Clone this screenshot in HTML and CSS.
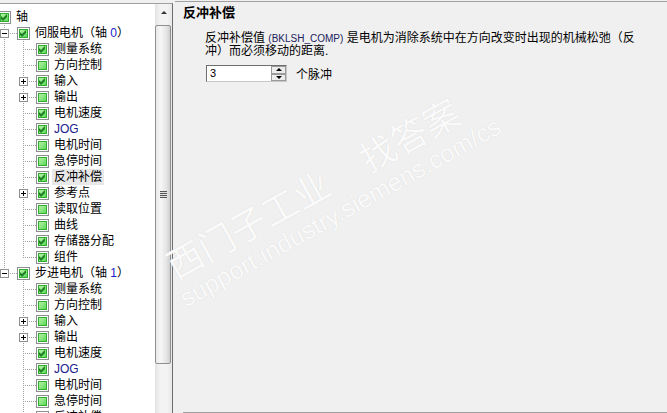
FILE: index.html
```html
<!DOCTYPE html>
<html lang="zh-CN">
<head>
  <meta charset="UTF-8">
  <title>反冲补偿</title>
  <link rel="stylesheet" href="styles.css">
</head>
<body>
  <div class="window">
    <div class="nav">
      <div class="tree">
        <!-- root -->
        <div class="row"><span class="cell conn"></span><span class="chk"><i><svg viewBox="0 0 7 7"><path d="M0 2L2 4L6 0V3L2 7L0 5Z"/></svg></i></span><span class="label">轴</span></div>

        <!-- axis 0 -->
        <div class="row"><span class="cell"></span><span class="cell conn mid"><b class="exp minus"></b></span><span class="chk"><i><svg viewBox="0 0 7 7"><path d="M0 2L2 4L6 0V3L2 7L0 5Z"/></svg></i></span><span class="label">伺服电机（轴 <em>0</em>）</span></div>
        <div class="row"><span class="cell"></span><span class="cell line"></span><span class="cell conn mid"></span><span class="chk"><i><svg viewBox="0 0 7 7"><path d="M0 2L2 4L6 0V3L2 7L0 5Z"/></svg></i></span><span class="label">测量系统</span></div>
        <div class="row"><span class="cell"></span><span class="cell line"></span><span class="cell conn mid"></span><span class="chk"><i></i></span><span class="label">方向控制</span></div>
        <div class="row"><span class="cell"></span><span class="cell line"></span><span class="cell conn mid"><b class="exp plus"></b></span><span class="chk"><i><svg viewBox="0 0 7 7"><path d="M0 2L2 4L6 0V3L2 7L0 5Z"/></svg></i></span><span class="label">输入</span></div>
        <div class="row"><span class="cell"></span><span class="cell line"></span><span class="cell conn mid"><b class="exp plus"></b></span><span class="chk"><i></i></span><span class="label">输出</span></div>
        <div class="row"><span class="cell"></span><span class="cell line"></span><span class="cell conn mid"></span><span class="chk"><i><svg viewBox="0 0 7 7"><path d="M0 2L2 4L6 0V3L2 7L0 5Z"/></svg></i></span><span class="label">电机速度</span></div>
        <div class="row"><span class="cell"></span><span class="cell line"></span><span class="cell conn mid"></span><span class="chk"><i><svg viewBox="0 0 7 7"><path d="M0 2L2 4L6 0V3L2 7L0 5Z"/></svg></i></span><span class="label latin">JOG</span></div>
        <div class="row"><span class="cell"></span><span class="cell line"></span><span class="cell conn mid"></span><span class="chk"><i></i></span><span class="label">电机时间</span></div>
        <div class="row"><span class="cell"></span><span class="cell line"></span><span class="cell conn mid"></span><span class="chk"><i></i></span><span class="label">急停时间</span></div>
        <div class="row"><span class="cell"></span><span class="cell line"></span><span class="cell conn mid"></span><span class="chk"><i><svg viewBox="0 0 7 7"><path d="M0 2L2 4L6 0V3L2 7L0 5Z"/></svg></i></span><span class="label selected">反冲补偿</span></div>
        <div class="row"><span class="cell"></span><span class="cell line"></span><span class="cell conn mid"><b class="exp plus"></b></span><span class="chk"><i><svg viewBox="0 0 7 7"><path d="M0 2L2 4L6 0V3L2 7L0 5Z"/></svg></i></span><span class="label">参考点</span></div>
        <div class="row"><span class="cell"></span><span class="cell line"></span><span class="cell conn mid"></span><span class="chk"><i></i></span><span class="label">读取位置</span></div>
        <div class="row"><span class="cell"></span><span class="cell line"></span><span class="cell conn mid"></span><span class="chk"><i></i></span><span class="label">曲线</span></div>
        <div class="row"><span class="cell"></span><span class="cell line"></span><span class="cell conn mid"></span><span class="chk"><i><svg viewBox="0 0 7 7"><path d="M0 2L2 4L6 0V3L2 7L0 5Z"/></svg></i></span><span class="label">存储器分配</span></div>
        <div class="row"><span class="cell"></span><span class="cell line"></span><span class="cell conn last"></span><span class="chk"><i><svg viewBox="0 0 7 7"><path d="M0 2L2 4L6 0V3L2 7L0 5Z"/></svg></i></span><span class="label">组件</span></div>

        <!-- axis 1 -->
        <div class="row"><span class="cell"></span><span class="cell conn last"><b class="exp minus"></b></span><span class="chk"><i><svg viewBox="0 0 7 7"><path d="M0 2L2 4L6 0V3L2 7L0 5Z"/></svg></i></span><span class="label">步进电机（轴 <em>1</em>）</span></div>
        <div class="row"><span class="cell"></span><span class="cell"></span><span class="cell conn mid"></span><span class="chk"><i><svg viewBox="0 0 7 7"><path d="M0 2L2 4L6 0V3L2 7L0 5Z"/></svg></i></span><span class="label">测量系统</span></div>
        <div class="row"><span class="cell"></span><span class="cell"></span><span class="cell conn mid"></span><span class="chk"><i></i></span><span class="label">方向控制</span></div>
        <div class="row"><span class="cell"></span><span class="cell"></span><span class="cell conn mid"><b class="exp plus"></b></span><span class="chk"><i></i></span><span class="label">输入</span></div>
        <div class="row"><span class="cell"></span><span class="cell"></span><span class="cell conn mid"><b class="exp plus"></b></span><span class="chk"><i></i></span><span class="label">输出</span></div>
        <div class="row"><span class="cell"></span><span class="cell"></span><span class="cell conn mid"></span><span class="chk"><i><svg viewBox="0 0 7 7"><path d="M0 2L2 4L6 0V3L2 7L0 5Z"/></svg></i></span><span class="label">电机速度</span></div>
        <div class="row"><span class="cell"></span><span class="cell"></span><span class="cell conn mid"></span><span class="chk"><i><svg viewBox="0 0 7 7"><path d="M0 2L2 4L6 0V3L2 7L0 5Z"/></svg></i></span><span class="label latin">JOG</span></div>
        <div class="row"><span class="cell"></span><span class="cell"></span><span class="cell conn mid"></span><span class="chk"><i></i></span><span class="label">电机时间</span></div>
        <div class="row"><span class="cell"></span><span class="cell"></span><span class="cell conn mid"></span><span class="chk"><i></i></span><span class="label">急停时间</span></div>
        <div class="row"><span class="cell"></span><span class="cell"></span><span class="cell conn mid"></span><span class="chk"><i><svg viewBox="0 0 7 7"><path d="M0 2L2 4L6 0V3L2 7L0 5Z"/></svg></i></span><span class="label">反冲补偿</span></div>
      </div>
      <div class="scrollbar">
        <div class="sb-up"><span class="arrow"></span></div>
        <div class="sb-thumb"><span class="grip"></span></div>
      </div>
    </div>

    <div class="detail">
      <div class="detail-body">
        <h1>反冲补偿</h1>
        <p>反冲补偿值 <span class="code">(BKLSH_COMP)</span> 是电机为消除系统中在方向改变时出现的机械松弛（反<br>冲）而必须移动的距离.</p>
        <div class="value-row">
          <div class="spin">
            <span class="spin-value">3</span>
            <span class="spin-btns"><span class="spin-btn up"></span><span class="spin-btn down"></span></span>
          </div>
          <span>个脉冲</span>
        </div>
      </div>
    </div>

    <div class="watermark wm-cn">西门子工业&nbsp;&nbsp;&nbsp;&nbsp;&nbsp;找答案</div>
    <div class="watermark wm-url">support.industry.siemens.com/cs</div>
  </div>
</body>
</html>
```

FILE: styles.css
```css
/* base */
body {
  margin: 0;
  background-color: #f0f0f0;
  color: #000;
  font-family: "Liberation Sans", "Noto Sans CJK SC", sans-serif;
  font-size: 12px;
  overflow: hidden;
}
.window {
  position: relative;
  display: flex;
  height: 413px;
  overflow: hidden;
}

/* left pane: tree + scrollbar */
.nav {
  display: flex;
  width: 172px;
  margin-top: 3px;
  border-top: 1px solid #a0a0a0;
  border-right: 1px solid #6d6d6d;
  background-color: #fff;
  flex: none;
}
.tree {
  flex: 1;
  padding-top: 5px;
  overflow: hidden;
}
.row {
  display: flex;
  align-items: center;
  height: 16px;
  margin-left: -21px;
  white-space: nowrap;
}
.cell {
  flex: none;
  width: 19px;
  height: 16px;
  box-sizing: border-box;
}
.line {
  background: repeating-linear-gradient(to bottom, #a0a0a0 0 1px, transparent 1px 2px) 6px 0 / 1px 100% no-repeat;
}
.conn {
  display: flex;
  align-items: center;
  padding-left: 2px;
}
.conn.mid {
  background:
    repeating-linear-gradient(to right, #a0a0a0 0 1px, transparent 1px 2px) 8px 8px / 11px 1px no-repeat,
    repeating-linear-gradient(to bottom, #a0a0a0 0 1px, transparent 1px 2px) 6px 0 / 1px 100% no-repeat;
}
.conn.last {
  background:
    repeating-linear-gradient(to right, #a0a0a0 0 1px, transparent 1px 2px) 8px 8px / 11px 1px no-repeat,
    repeating-linear-gradient(to bottom, #a0a0a0 0 1px, transparent 1px 2px) 6px 0 / 1px 9px no-repeat;
}
.exp {
  display: block;
  width: 9px;
  height: 9px;
  box-sizing: border-box;
  border: 1px solid #919191;
  background: linear-gradient(#000, #000) center / 5px 1px no-repeat, #fff;
}
.exp.plus {
  background:
    linear-gradient(#000, #000) center / 5px 1px no-repeat,
    linear-gradient(#000, #000) center / 1px 5px no-repeat,
    #fff;
}
.chk {
  flex: none;
  width: 13px;
  height: 13px;
  box-sizing: border-box;
  border: 1px solid #8e8f8f;
  padding: 1px;
  background-color: #fff;
}
.chk i {
  display: flex;
  align-items: center;
  justify-content: center;
  width: 9px;
  height: 9px;
  box-sizing: border-box;
  border: 1px solid #2fae2f;
  background: linear-gradient(135deg, #b6f3a6, #5bd85b);
}
.chk svg {
  width: 7px;
  height: 7px;
  fill: #1f7f23;
}
.label {
  margin-left: 3px;
  padding: 0 2px;
  line-height: 16px;
}
.label em {
  font-style: normal;
  color: #1a1acc;
}
.label.latin {
  color: #20208a;
}
.label.selected {
  background-color: #e8e8e8;
}

/* scrollbar */
.scrollbar {
  flex: none;
  width: 17px;
  background: linear-gradient(to right, #e3e3e3, #f3f3f3 30%, #f3f3f3 70%, #e8e8e8);
}
.sb-up {
  display: flex;
  align-items: center;
  justify-content: center;
  height: 17px;
  margin-bottom: 4px;
}
.arrow {
  width: 0;
  height: 0;
  border-left: 3px solid transparent;
  border-right: 3px solid transparent;
  border-bottom: 3px solid #333;
}
.sb-thumb {
  display: flex;
  align-items: center;
  justify-content: center;
  height: 337px;
  margin: 0 1px 0 0;
  border: 1px solid #8f8f8f;
  border-radius: 2px;
  background: linear-gradient(to right, #e9e9e9, #f6f6f6 35%, #e4e4e4 75%, #cfcfcf);
}
.grip {
  width: 7px;
  height: 7px;
  background: repeating-linear-gradient(to bottom, #555 0 1px, #e0e0e0 1px 2px);
}

/* right pane */
.detail {
  flex: 1;
  display: flex;
  flex-direction: column;
  margin-top: 1px;
  margin-left: 2px;
  border-top: 1px solid #a0a0a0;
  padding-left: 8px;
}
.detail-body {
  flex: 1;
  border-bottom: 1px solid #a0a0a0;
}
h1 {
  margin: 0;
  padding-top: 3px;
  font-size: 13px;
  font-weight: bold;
  line-height: 16px;
}
p {
  margin: 11px 0 0 22px;
  line-height: 13px;
}
.code {
  color: #22225e;
  font-size: 10px;
}
.value-row {
  display: flex;
  align-items: center;
  gap: 9px;
  margin: 7px 0 0 23px;
}
.spin {
  display: flex;
  width: 81px;
  height: 17px;
  box-sizing: border-box;
  border: 1px solid #6e6e6e;
  border-right-color: #c8c8c8;
  border-bottom-color: #c8c8c8;
  background-color: #fff;
}
.spin-value {
  flex: 1;
  padding-left: 3px;
  line-height: 15px;
  font-size: 11px;
}
.spin-btns {
  display: flex;
  flex-direction: column;
  width: 15px;
}
.spin-btn {
  flex: 1;
  display: flex;
  align-items: center;
  justify-content: center;
  border: 1px solid #9a9a9a;
  background-color: #ececec;
}
.spin-btn::before {
  content: "";
  border-left: 3px solid transparent;
  border-right: 3px solid transparent;
}
.spin-btn.up::before {
  border-bottom: 3px solid #000;
}
.spin-btn.down::before {
  border-top: 3px solid #000;
}

/* faint watermark over the page */
.watermark {
  position: absolute;
  transform-origin: 0 100%;
  transform: rotate(-29deg);
  white-space: nowrap;
  color: #fafafa;
  text-shadow: 0 0 1px #d4d4d4;
  pointer-events: none;
}
.wm-cn {
  left: 177px;
  top: 246px;
  font-size: 36px;
  line-height: 36px;
  font-family: "Noto Sans CJK SC", sans-serif;
}
.wm-url {
  left: 188px;
  top: 286px;
  font-size: 25px;
  line-height: 25px;
}
```
